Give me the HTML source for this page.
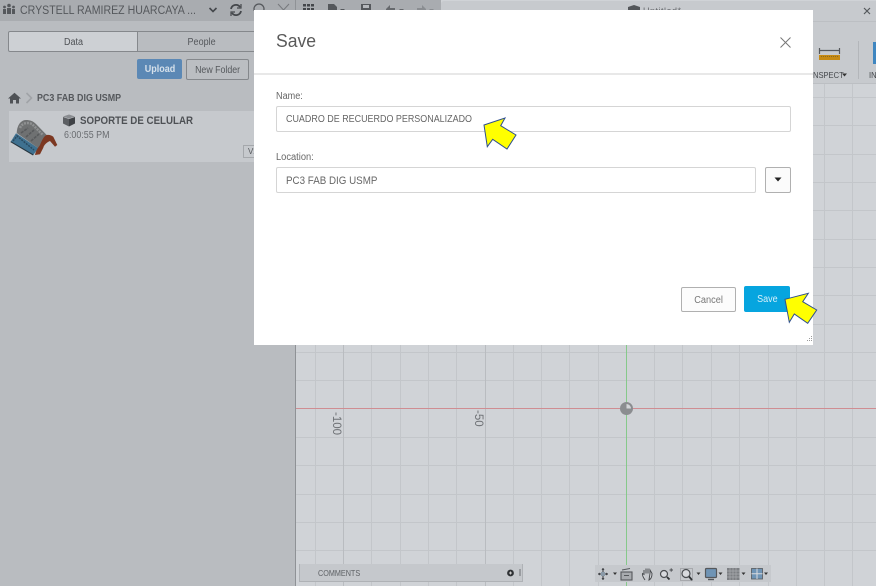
<!DOCTYPE html>
<html><head><meta charset="utf-8">
<style>
html,body{margin:0;padding:0;width:876px;height:586px;overflow:hidden;background:#d0d3d7;font-family:"Liberation Sans",sans-serif}
.a{position:absolute;white-space:nowrap}
.box{position:absolute;box-sizing:border-box}
.s{display:inline-block;transform-origin:left center}
.c{display:inline-block;transform-origin:center center}
</style></head><body>
<div class="box" style="left:0;top:0;width:876px;height:586px;overflow:hidden;filter:blur(.35px)">
<!-- canvas grid -->
<svg class="a" style="left:0;top:0" width="876" height="586" viewBox="0 0 876 586">
<rect width="876" height="586" fill="#d0d3d7"/>
<g stroke="#c3c6ca" stroke-width="1">
<path d="M315.5 83V586M371.5 83V586M400.5 83V586M428.5 83V586M456.5 83V586M513.5 83V586M541.5 83V586M569.5 83V586M598.5 83V586M654.5 83V586M682.5 83V586M711.5 83V586M739.5 83V586M768.5 83V586M796.5 83V586M824.5 83V586M852.5 83V586"/>
<path d="M296 97.5H876M296 125.5H876M296 154.5H876M296 182.5H876M296 210.5H876M296 239.5H876M296 267.5H876M296 295.5H876M296 324.5H876M296 352.5H876M296 380.5H876M296 437.5H876M296 465.5H876M296 494.5H876M296 522.5H876M296 550.5H876"/>
</g>
<path d="M343.5 83V586M485.5 83V586" stroke="#b9bcc0"/>
<path d="M626.5 345V586" stroke="#86c98a"/>
<path d="M296 408.5H876" stroke="#cf8d92"/>
<circle cx="626.5" cy="408.5" r="6.500" fill="#8b8d90"/>
<path d="M626.5 408.5V404A4.500 4.500 0 0 1 631 408.500Z" fill="#d3d5d8"/>
<text transform="translate(333,412) rotate(90)" font-family="Liberation Sans" font-size="11.500" fill="#6e7175">-100</text>
<text transform="translate(475,410) rotate(90)" font-family="Liberation Sans" font-size="11.500" fill="#6e7175">-50</text>
</svg>

<!-- left panel -->
<div class="box" style="left:0;top:21px;width:295px;height:565px;background:#b9bcc0"></div>
<div class="box" style="left:295px;top:21px;width:1px;height:565px;background:#8f9296"></div>
<!-- top bar -->
<div class="box" style="left:0;top:0;width:441px;height:21px;background:#a9acb0"></div>
<div class="box" style="left:441px;top:1px;width:435px;height:82px;background:#c7cace;border-radius:3px 0 0 0"></div>
<div class="box" style="left:296px;top:12px;width:145px;height:71px;background:#c7cace"></div>
<div class="box" style="left:296px;top:21px;width:580px;height:1px;background:#bcbfc3"></div>
<div class="box" style="left:296px;top:83px;width:580px;height:1px;background:#bcbfc3"></div>

<svg class="a" style="left:2px;top:3px" width="14" height="12" viewBox="0 0 14 12" fill="#55585c">
<circle cx="7" cy="2.500" r="1.800"/><circle cx="2.500" cy="4" r="1.400"/><circle cx="11.500" cy="4" r="1.400"/>
<rect x="5" y="5" width="4" height="6"/><rect x="1" y="6" width="3" height="5"/><rect x="10" y="6" width="3" height="5"/>
</svg>
<div class="a" style="left:20px;top:4px;font-size:11.500px;line-height:14px;color:#55585c"><span class="s" style="transform:scaleX(.92)">CRYSTELL RAMIREZ HUARCAYA ...</span></div>
<svg class="a" style="left:208px;top:6px" width="10" height="8" viewBox="0 0 10 8"><path d="M1.500 2L5 5.500 8.500 2" fill="none" stroke="#44474b" stroke-width="1.600"/></svg>
<svg class="a" style="left:229px;top:3px" width="14" height="14" viewBox="0 0 14 14" fill="none" stroke="#44474b" stroke-width="1.800"><path d="M2 6A5 5 0 0 1 11 4M12 8A5 5 0 0 1 3 10"/><path d="M12 1V5H8M2 13V9H6" stroke-width="1.200" /></svg>
<svg class="a" style="left:252px;top:2px" width="14" height="9" viewBox="0 0 14 9"><circle cx="7" cy="7" r="5" fill="none" stroke="#55585c" stroke-width="1.300"/></svg>
<svg class="a" style="left:277px;top:3px" width="13" height="8" viewBox="0 0 13 8"><path d="M1 1L6.500 7 12 1" fill="none" stroke="#77797d" stroke-width="1"/></svg>
<div class="box" style="left:295px;top:0;width:1px;height:21px;background:#8f9296"></div>

<svg class="a" style="left:302px;top:2px" width="140" height="10" viewBox="0 0 140 10" fill="#44474b">
<rect x="1" y="2" width="3" height="2.500"/><rect x="5" y="2" width="3" height="2.500"/><rect x="9" y="2" width="3" height="2.500"/>
<rect x="1" y="6" width="3" height="2.500"/><rect x="5" y="6" width="3" height="2.500"/><rect x="9" y="6" width="3" height="2.500"/>
<path d="M26 2H32L35 5V10H26Z" fill="#55585c"/><path d="M38 7H43L40.500 9.500Z" fill="#55585c"/>
<path d="M59 2H69V10H59Z" fill="#55585c"/><rect x="61" y="3" width="6" height="3" fill="#b5b8bc"/>
<path d="M84 7L88 3V6H93V8H84Z" fill="#66696d"/><path d="M97 7H102L99.500 9.500Z" fill="#66696d"/>
<path d="M124 7L120 3V6H115V8H124Z" fill="#8a8d91"/><path d="M127 7H132L129.500 9.500Z" fill="#8a8d91"/>
</svg>
<!-- tab -->
<svg class="a" style="left:627px;top:5px" width="14" height="6" viewBox="0 0 14 6"><path d="M1 2L7 0 13 2V6H1Z" fill="#54575b"/></svg>
<div class="a" style="left:643px;top:7px;font-size:9px;line-height:8px;height:7px;overflow:hidden;color:#66696d;letter-spacing:.5px">Untitled*</div>
<svg class="a" style="left:863px;top:7px" width="8" height="8" viewBox="0 0 8 8"><path d="M1 1L7 7M7 1L1 7" stroke="#55585c" stroke-width="1.200"/></svg>
<!-- toolbar right -->
<svg class="a" style="left:816px;top:46px" width="26" height="16" viewBox="0 0 26 16">
<rect x="3" y="9" width="21" height="5" fill="#c78a12"/>
<path d="M3.500 2V8M23.500 2V8M4 4.500H23" stroke="#55585c" stroke-width="1.200" fill="none"/>
<path d="M5 10.500H23" stroke="#8a6a20" stroke-dasharray="1 1" stroke-width="1"/>
</svg>
<div class="box" style="left:858px;top:41px;width:1px;height:38px;background:#b3b6ba"></div>
<div class="box" style="left:873px;top:42px;width:3px;height:22px;background:#3f86c0"></div>
<div class="a" style="left:813px;top:70px;font-size:8.500px;line-height:11px;color:#44474b"><span class="s" style="transform:scaleX(.89)">NSPECT</span></div>
<svg class="a" style="left:842px;top:73px" width="6" height="5"><path d="M0 .5H5L2.500 3.500Z" fill="#333"/></svg>
<div class="a" style="left:869px;top:70px;font-size:8.500px;line-height:11px;color:#44474b"><span class="s" style="transform:scaleX(.89)">IN</span></div>

<!-- tabs -->
<div class="box" style="left:8px;top:31px;width:130px;height:21px;background:#cdd0d4;border:1px solid #85888c;border-radius:2px 0 0 2px;font-size:10px;line-height:22px;text-align:center;color:#4e5155;padding-left:1px"><span class="c" style="transform:scaleX(.9)">Data</span></div>
<div class="box" style="left:137px;top:31px;width:130px;height:21px;background:#b9bcc0;border:1px solid #85888c;font-size:10px;line-height:22px;text-align:center;color:#55585c"><span class="c" style="transform:scaleX(.9)">People</span></div>
<!-- buttons -->
<div class="box" style="left:137px;top:59px;width:45px;height:20px;background:#5b88b5;border-radius:2px;font-size:10px;font-weight:bold;line-height:22px;text-align:center;color:#d5e0ea"><span class="c" style="transform:scaleX(.9)">Upload</span></div>
<div class="box" style="left:186px;top:59px;width:63px;height:21px;background:#bbbec2;border:1px solid #85888c;border-radius:2px;font-size:10px;line-height:22px;text-align:center;color:#55585c"><span class="c" style="transform:scaleX(.88)">New Folder</span></div>
<!-- breadcrumb -->
<svg class="a" style="left:8px;top:92px" width="13" height="12" viewBox="0 0 13 12"><path d="M6.500 .8L13 6.500H11V11.500H8V8H5V11.500H2V6.500H0Z" fill="#4f5256"/></svg>
<svg class="a" style="left:25px;top:92px" width="8" height="12" viewBox="0 0 8 12"><path d="M1.500 1L6.500 6 1.500 11" fill="none" stroke="#a0a3a7" stroke-width="1.600"/></svg>
<div class="a" style="left:37px;top:92px;font-size:10px;font-weight:bold;line-height:14px;color:#55585c"><span class="s" style="transform:scaleX(.89)">PC3 FAB DIG USMP</span></div>
<!-- file row -->
<div class="box" style="left:9px;top:111px;width:250px;height:51px;background:#c6c9cd"></div>
<svg class="a" style="left:9px;top:111px" width="52" height="50" viewBox="0 0 52 50">
<path d="M7.700 22C8 14 12 9 17 9 21 9 24 10 27 13L37.700 24 29.300 37.300Z" fill="#6f7172"/>
<path d="M11 17C13 12 18 11 23 13L34 24" fill="none" stroke="#8f9192" stroke-width="2.500" stroke-dasharray="2 1"/>
<path d="M12 22L19 17M17 26L25 19M22 30L30 23" stroke="#585a5c" stroke-width="1.600" stroke-dasharray="3 1"/>
<path d="M1.700 30.700L7 22.300 29.300 37.300 24.300 44Z" fill="#3f7190"/>
<path d="M4 30L8 25 25 39" fill="none" stroke="#2a4a60" stroke-width="1.500" stroke-dasharray="2 1"/>
<path d="M26 44C27 39 29 37 31 34 33 29 35 25 37.700 24 40 23.500 42 24 44.300 25.700L48.300 34 46 35.700 41 30C38 31 35 34 34.300 36.700L31 43.300Z" fill="#7c3822"/>
<path d="M1.700 30.700L24.300 44" fill="none" stroke="#27363f" stroke-width="1.100"/>
</svg>
<svg class="a" style="left:62px;top:114px" width="14" height="13" viewBox="0 0 14 13"><path d="M1 2.500L7 .5 13 2.500 7 4.500Z" fill="#8a8d91"/><path d="M1 3V9.500L7 12.500V5Z" fill="#5c5f63"/><path d="M13 3V9.500L7 12.500V5Z" fill="#3f4246"/></svg>
<div class="a" style="left:80px;top:114px;font-size:11px;font-weight:bold;line-height:14px;color:#4e5155"><span class="s" style="transform:scaleX(.885)">SOPORTE DE CELULAR</span></div>
<div class="a" style="left:64px;top:129px;font-size:10px;line-height:13px;color:#696c70"><span class="s" style="transform:scaleX(.89)">6:00:55 PM</span></div>
<div class="box" style="left:243px;top:145px;width:14px;height:13px;border:1px solid #a5a8ac;font-size:8px;line-height:11px;color:#55585c;padding-left:4px">V2</div>

<!-- comments -->
<div class="box" style="left:299px;top:564px;width:224px;height:18px;background:#c5c8cc;border:1px solid #afb2b6;border-top:0"></div>
<div class="a" style="left:318px;top:567px;font-size:8.500px;line-height:12px;color:#5c5f63"><span class="s" style="transform:scaleX(.85)">COMMENTS</span></div>
<svg class="a" style="left:507px;top:569px" width="16" height="10" viewBox="0 0 16 10"><circle cx="3.500" cy="4" r="3.400" fill="#2f3235"/><path d="M2 4H5M3.500 2.500V5.500" stroke="#ccc" stroke-width="1"/><path d="M13 0V7" stroke="#7c7f83" stroke-width="1.200"/></svg>

<!-- nav bar -->
<div class="box" style="left:595px;top:565px;width:176px;height:17px;background:#c6c9cd"></div>
<svg class="a" style="left:595px;top:565px" width="176" height="18" viewBox="0 0 176 18" fill="none">
<path d="M3 9H13M8 3V15" stroke="#4a4d51" stroke-width="1.200"/><path d="M3 9L5 7.500V10.500ZM13 9L11 7.500V10.500ZM8 3L6.500 5H9.500ZM8 15L6.500 13H9.500Z" fill="#3f4246"/><rect x="6" y="7" width="4" height="4" fill="#8a9aa8"/>
<path d="M18 7.500H22L20 10Z" fill="#333"/>
<rect x="26" y="7" width="11" height="8" stroke="#55585c" fill="#a8abaf" stroke-width="1.100"/><path d="M27 5L35 3.500M29 10.500H34" stroke="#55585c" stroke-width="1.100"/>
<path d="M50 15C48 12 47 10 47.500 8.500L49 9.500V5M51 8.500V3.500M53 8.500V3.500M55 8.500V5L57 8.500C57 12 56 14 54 15Z" stroke="#4a4d51" stroke-width="1" fill="#d8dade"/>
<circle cx="69" cy="9" r="3.500" stroke="#4a4d51" stroke-width="1.200" fill="#d8dade"/><path d="M72 12L74.500 14.500" stroke="#2f3235" stroke-width="1.800"/><path d="M74.500 5H78M76.200 3.200V6.800" stroke="#4a4d51" stroke-width=".9"/>
<rect x="85.500" y="3.500" width="12" height="12" stroke="#85888c" stroke-dasharray="1 1"/><circle cx="91" cy="8.500" r="4" stroke="#4a4d51" stroke-width="1.200" fill="#d8dade"/><path d="M94 11.500L97 15" stroke="#2f3235" stroke-width="1.800"/>
<path d="M101.500 7.500H105.500L103.500 10Z" fill="#333"/>
<rect x="110.500" y="3.500" width="11" height="9" rx="1" fill="#6f94b5" stroke="#55585c" stroke-width="1.200"/><path d="M113 14.500H119" stroke="#55585c" stroke-width="1.400"/>
<path d="M123.500 7.500H127.500L125.500 10Z" fill="#333"/>
<rect x="132" y="3" width="12.500" height="12" fill="#7c7f83"/><path d="M135 3V15M138 3V15M141 3V15M132 6H144.500M132 9H144.500M132 12H144.500" stroke="#a9acb0" stroke-width=".7"/>
<path d="M146.500 7.500H150.500L148.500 10Z" fill="#333"/>
<rect x="156.500" y="3.500" width="11" height="10.500" fill="#6f94b5" stroke="#55585c" stroke-width=".8"/><path d="M162 3.500V14M156.500 8.800H167.500" stroke="#d8dade"/>
<path d="M169 7.500H173L171 10Z" fill="#333"/>
</svg>

<!-- dialog -->
<div class="box" style="left:254px;top:10px;width:559px;height:335px;background:#fff">
  <div class="a" style="left:22px;top:20px;font-size:18.500px;line-height:22px;color:#5a5a5a"><span class="s" style="transform:scaleX(.95)">Save</span></div>
  <svg class="a" style="left:526px;top:27px" width="11" height="11" viewBox="0 0 11 11"><path d="M.5 .5L10.500 10.500M10.500 .5L.5 10.500" stroke="#777" stroke-width="1"/></svg>
  <div class="a" style="left:0;top:63px;width:559px;height:2px;background:#e8e8e8"></div>
  <div class="a" style="left:22px;top:80px;font-size:10px;line-height:13px;color:#666"><span class="s" style="transform:scaleX(.91)">Name:</span></div>
  <div class="box" style="left:22px;top:96px;width:515px;height:26px;border:1px solid #d5d5d5;border-radius:2px;font-size:10px;line-height:26px;padding-left:9px;color:#666"><span class="s" style="transform:scaleX(.895)">CUADRO DE RECUERDO PERSONALIZADO</span></div>
  <div class="a" style="left:22px;top:141px;font-size:10px;line-height:13px;color:#666"><span class="s" style="transform:scaleX(.93)">Location:</span></div>
  <div class="box" style="left:22px;top:157px;width:480px;height:26px;border:1px solid #d5d5d5;border-radius:2px;font-size:11px;line-height:26px;padding-left:9px;color:#666"><span class="s" style="transform:scaleX(.89)">PC3 FAB DIG USMP</span></div>
  <div class="box" style="left:511px;top:157px;width:26px;height:26px;border:1px solid #b0b0b0;border-radius:2px;background:#fbfbfb"></div>
  <svg class="a" style="left:520px;top:167px" width="8" height="6"><path d="M.5 .5H7.500L4 4.500Z" fill="#222"/></svg>
  <div class="box" style="left:427px;top:277px;width:55px;height:25px;border:1px solid #b0b0b0;border-radius:2px;background:#fcfcfc;font-size:10px;line-height:25px;text-align:center;color:#777"><span class="c" style="transform:scaleX(.92)">Cancel</span></div>
  <div class="box" style="left:490px;top:276px;width:46px;height:26px;border-radius:2px;background:#06a5df;font-size:10px;line-height:28px;text-align:center;color:#d9f0fa"><span class="c" style="transform:scaleX(.9)">Save</span></div>
  <svg class="a" style="left:552px;top:326px" width="7" height="7" viewBox="0 0 7 7" fill="#9a9a9a"><rect x="5" y="0" width="1" height="1"/><rect x="3" y="2" width="1" height="1"/><rect x="5" y="2" width="1" height="1"/><rect x="1" y="4" width="1" height="1"/><rect x="3" y="4" width="1" height="1"/><rect x="5" y="4" width="1" height="1"/></svg>
</div>
<!-- arrows -->
<svg class="a" style="left:0;top:0" width="876" height="586" viewBox="0 0 876 586">
<path d="M484 125L505 118 500.700 125.700 516 135 507 149 492.700 139.300 487.300 146.700Z" fill="#ffff00" stroke="#2f4f8f" stroke-width="1"/>
<path d="M785 299.300L808.300 293.300 802.700 301.700 816.700 310 807.700 323.300 794.300 314 789.300 322.300Z" fill="#ffff00" stroke="#2f4f8f" stroke-width="1"/>
</svg>
</div>
</body></html>
